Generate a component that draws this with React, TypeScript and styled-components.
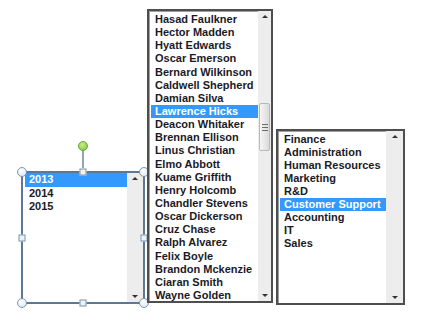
import styled, { createGlobalStyle } from 'styled-components';

const GlobalStyle = createGlobalStyle`
  html, body {
    margin: 0;
    padding: 0;
    background: #ffffff;
  }
  body {
    font-family: "Liberation Sans", Arial, sans-serif;
  }
`;

const Canvas = styled.div`
  width: 433px;
  height: 322px;
  display: flex;
  align-items: flex-start;
  gap: 2px;
  padding-left: 21px;
  box-sizing: border-box;
  overflow: hidden;
`;

const Slot = styled.div<{ $top: number; $gap?: number }>`
  margin-top: ${({ $top }) => $top}px;
  margin-left: ${({ $gap }) => $gap ?? 0}px;
  position: relative;
`;

const ListBox = styled.div<{ $w: number; $h: number; $framed?: boolean }>`
  width: ${({ $w }) => $w}px;
  height: ${({ $h }) => $h}px;
  box-sizing: border-box;
  display: flex;
  background: #fff;
  border: 2px solid ${({ $framed }) => ($framed ? '#5d7894' : '#4e4e4e')};
  box-shadow: ${({ $framed }) => ($framed ? 'none' : 'inset 1px 1px 0 #a0a0a0')};
`;

const Items = styled.ul<{ $row: number; $pad: number }>`
  list-style: none;
  margin: 0;
  padding: ${({ $pad }) => $pad}px 0 0 2px;
  flex: 1;
  min-width: 0;
  font-size: 11px;
  font-weight: 700;
  color: #1a1a26;
  line-height: ${({ $row }) => $row}px;
`;

const Item = styled.li<{ $sel?: boolean }>`
  padding-left: 4px;
  white-space: nowrap;
  background: ${({ $sel }) => ($sel ? '#3399ff' : 'transparent')};
  color: ${({ $sel }) => ($sel ? '#ffffff' : 'inherit')};
`;

const ScrollBar = styled.div<{ $w: number }>`
  width: ${({ $w }) => $w}px;
  background: #ededed;
  display: flex;
  flex-direction: column;
  align-items: center;
  justify-content: space-between;
  padding: 4px 0;
  box-sizing: border-box;
  position: relative;
`;

const Arrow = styled.div<{ $down?: boolean }>`
  width: 0;
  height: 0;
  border-left: 3px solid transparent;
  border-right: 3px solid transparent;
  ${({ $down }) =>
    $down ? 'border-top: 3px solid #333;' : 'border-bottom: 3px solid #333;'}
`;

const Thumb = styled.div<{ $top: number; $h: number }>`
  position: absolute;
  left: 1px;
  right: 1px;
  top: ${({ $top }) => $top}px;
  height: ${({ $h }) => $h}px;
  background: linear-gradient(to right, #f6f6f6, #dadada);
  border: 1px solid #b8b8b8;
  border-radius: 2px;
  box-sizing: border-box;
  display: flex;
  flex-direction: column;
  align-items: center;
  justify-content: center;
  gap: 2px;
`;

const Grip = styled.span`
  width: 6px;
  height: 1px;
  background: #6d6d6d;
`;

const Handle = styled.div<{ $x: number; $y: number; $round?: boolean }>`
  position: absolute;
  left: ${({ $x }) => $x}px;
  top: ${({ $y }) => $y}px;
  width: ${({ $round }) => ($round ? 10 : 7)}px;
  height: ${({ $round }) => ($round ? 10 : 7)}px;
  transform: translate(-50%, -50%);
  box-sizing: border-box;
  border: 1px solid #7f97ad;
  border-radius: ${({ $round }) => ($round ? '50%' : '0')};
  background: ${({ $round }) =>
    $round ? 'radial-gradient(circle at 40% 35%, #ffffff, #d4e3f0)' : '#eaf2fa'};
`;

const Rotator = styled.div`
  position: absolute;
  left: 62px;
  top: -30px;
  width: 10px;
  height: 10px;
  transform: translateX(-50%);
  border-radius: 50%;
  border: 1px solid #6aa534;
  box-sizing: border-box;
  background: radial-gradient(circle at 40% 35%, #c8f08a, #74c23a);
`;

const Stem = styled.div`
  position: absolute;
  left: 61px;
  top: -21px;
  width: 2px;
  height: 18px;
  background: #8fa6bb;
`;

const names = [
  'Hasad Faulkner',
  'Hector Madden',
  'Hyatt Edwards',
  'Oscar Emerson',
  'Bernard Wilkinson',
  'Caldwell Shepherd',
  'Damian Silva',
  'Lawrence Hicks',
  'Deacon Whitaker',
  'Brennan Ellison',
  'Linus Christian',
  'Elmo Abbott',
  'Kuame Griffith',
  'Henry Holcomb',
  'Chandler Stevens',
  'Oscar Dickerson',
  'Cruz Chase',
  'Ralph Alvarez',
  'Felix Boyle',
  'Brandon Mckenzie',
  'Ciaran Smith',
  'Wayne Golden',
];

const departments = [
  'Finance',
  'Administration',
  'Human Resources',
  'Marketing',
  'R&D',
  'Customer Support',
  'Accounting',
  'IT',
  'Sales',
];

const years = ['2013', '2014', '2015'];

export default function App() {
  const w = 124;
  const h = 133;
  return (
    <>
      <GlobalStyle />
      <Canvas>
        <Slot $top={171}>
          <ListBox $w={w} $h={h} $framed>
            <Items $row={13.5} $pad={0}>
              {years.map((y, i) => (
                <Item key={y} $sel={i === 0}>
                  {y}
                </Item>
              ))}
            </Items>
            <ScrollBar $w={16}>
              <Arrow />
              <Arrow $down />
            </ScrollBar>
          </ListBox>
          <Stem />
          <Rotator />
          <Handle $round $x={1} $y={1} />
          <Handle $x={62} $y={1} />
          <Handle $round $x={w - 1} $y={1} />
          <Handle $x={1} $y={h / 2} />
          <Handle $x={w - 1} $y={h / 2} />
          <Handle $round $x={1} $y={h - 1} />
          <Handle $x={62} $y={h - 1} />
          <Handle $round $x={w - 1} $y={h - 1} />
        </Slot>
        <Slot $top={9}>
          <ListBox $w={126} $h={294}>
            <Items $row={13.14} $pad={2}>
              {names.map((n, i) => (
                <Item key={n} $sel={i === 7}>
                  {n}
                </Item>
              ))}
            </Items>
            <ScrollBar $w={13}>
              <Arrow />
              <Thumb $top={92} $h={48}>
                <Grip />
                <Grip />
                <Grip />
              </Thumb>
              <Arrow $down />
            </ScrollBar>
          </ListBox>
        </Slot>
        <Slot $top={129} $gap={1}>
          <ListBox $w={129} $h={176}>
            <Items $row={13} $pad={2}>
              {departments.map((d, i) => (
                <Item key={d} $sel={i === 5}>
                  {d}
                </Item>
              ))}
            </Items>
            <ScrollBar $w={17}>
              <Arrow />
              <Arrow $down />
            </ScrollBar>
          </ListBox>
        </Slot>
      </Canvas>
    </>
  );
}
